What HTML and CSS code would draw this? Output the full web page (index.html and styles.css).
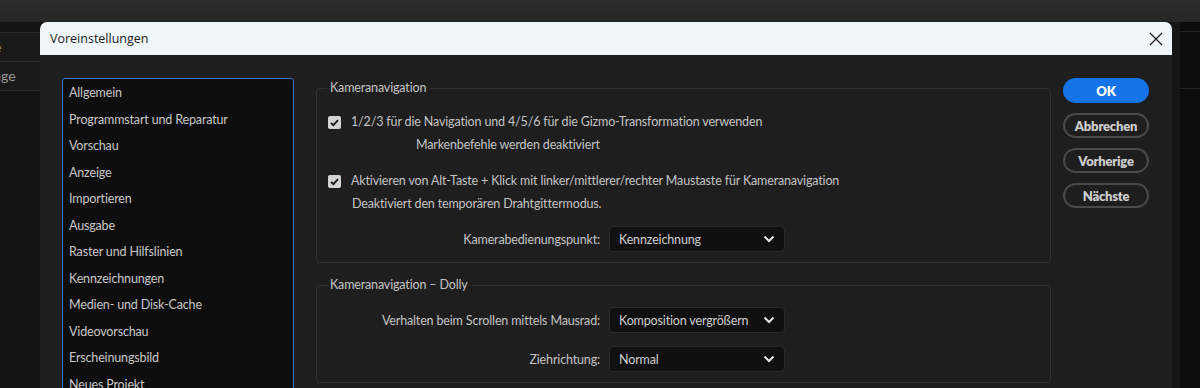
FILE: index.html
```html
<!DOCTYPE html>
<html lang="de">
<head>
    <meta charset="UTF-8" />
    <title>Voreinstellungen</title>
    <link rel="stylesheet" href="styles.css">
</head>
<body>

    <!-- App behind the dialog -->
    <div class="app">
        <div class="topbar"></div>
        <div class="workspace">
            <div class="side">
                <div class="side-gap"></div>
                <div class="side-row">e</div>
                <div class="side-row">age</div>
            </div>
            <div class="stage"></div>
            <div class="right-panel">
                <div class="rp-row"></div>
                <div class="rp-row tall"></div>
            </div>
        </div>
    </div>

    <!-- Dialog -->
    <div class="dialog">
        <div class="titlebar">
            <span class="title">Voreinstellungen</span>
            <svg class="close" width="14" height="14" viewBox="0 0 14 14">
                <path d="M1 1 L13 13 M13 1 L1 13" stroke="#1a1a1a" stroke-width="1.2" fill="none" />
            </svg>
        </div>

        <div class="dialog-body">
            <ul class="cat-list">
                <li>Allgemein</li>
                <li>Programmstart und Reparatur</li>
                <li>Vorschau</li>
                <li>Anzeige</li>
                <li>Importieren</li>
                <li>Ausgabe</li>
                <li>Raster und Hilfslinien</li>
                <li>Kennzeichnungen</li>
                <li>Medien- und Disk-Cache</li>
                <li>Videovorschau</li>
                <li>Erscheinungsbild</li>
                <li>Neues Projekt</li>
            </ul>

            <div class="settings">
                <fieldset class="group group-nav">
                    <legend>Kameranavigation</legend>

                    <div class="check-row">
                        <span class="checkbox">
                            <svg width="13" height="13" viewBox="0 0 13 13"><path d="M3 6.8 L5.4 9.2 L10 4.2" stroke="#111" stroke-width="1.8" fill="none" /></svg>
                        </span>
                        <span>1/2/3 für die Navigation und 4/5/6 für die Gizmo-Transformation verwenden</span>
                    </div>
                    <div class="note note-indent">Markenbefehle werden deaktiviert</div>

                    <div class="check-row second">
                        <span class="checkbox">
                            <svg width="13" height="13" viewBox="0 0 13 13"><path d="M3 6.8 L5.4 9.2 L10 4.2" stroke="#111" stroke-width="1.8" fill="none" /></svg>
                        </span>
                        <span>Aktivieren von Alt-Taste + Klick mit linker/mittlerer/rechter Maustaste für Kameranavigation</span>
                    </div>
                    <div class="note">Deaktiviert den temporären Drahtgittermodus.</div>

                    <div class="field-row first-field">
                        <label>Kamerabedienungspunkt:</label>
                        <div class="select"><span>Kennzeichnung</span><svg width="12" height="8" viewBox="0 0 12 8"><path d="M1.5 1.5 L6 6 L10.5 1.5" stroke="#e6e6e6" stroke-width="2" fill="none" /></svg></div>
                    </div>
                </fieldset>

                <fieldset class="group group-dolly">
                    <legend>Kameranavigation – Dolly</legend>

                    <div class="field-row">
                        <label>Verhalten beim Scrollen mittels Mausrad:</label>
                        <div class="select"><span>Komposition vergrößern</span><svg width="12" height="8" viewBox="0 0 12 8"><path d="M1.5 1.5 L6 6 L10.5 1.5" stroke="#e6e6e6" stroke-width="2" fill="none" /></svg></div>
                    </div>
                    <div class="field-row next">
                        <label>Ziehrichtung:</label>
                        <div class="select"><span>Normal</span><svg width="12" height="8" viewBox="0 0 12 8"><path d="M1.5 1.5 L6 6 L10.5 1.5" stroke="#e6e6e6" stroke-width="2" fill="none" /></svg></div>
                    </div>
                </fieldset>
            </div>

            <div class="actions">
                <button class="btn primary">OK</button>
                <button class="btn">Abbrechen</button>
                <button class="btn">Vorherige</button>
                <button class="btn">Nächste</button>
            </div>
        </div>
    </div>

</body>
</html>
```

FILE: styles.css
```css
* {
    margin: 0;
    padding: 0;
    box-sizing: border-box;
}

html,
body {
    width: 100%;
    height: 100%;
    overflow: hidden;
    background-color: #101010;
    font-family: 'Lato', 'Noto Sans', sans-serif;
}

/* app behind */

.app {
    display: flex;
    flex-direction: column;
    height: 100%;
}

.topbar {
    height: 22px;
    background: linear-gradient(#2d2d2d, #262626);
}

.workspace {
    flex: 1;
    display: flex;
}

.side {
    width: 40px;
    background-color: #141414;
}

.side-gap {
    height: 11px;
    border-bottom: 1px solid #2a2a2a;
}

.side-row {
    height: 29px;
    line-height: 27px;
    font-size: 14px;
    color: #9a9a9a;
    margin-left: -6px;
    border-bottom: 1px solid #2c2c2c;
    background-color: #191919;
    overflow: hidden;
}

.stage {
    flex: 1;
}

.right-panel {
    width: 28px;
    background-color: #0d0d0d;
    border-left: 8px solid #161616;
}

.rp-row {
    height: 10px;
    border-bottom: 1px solid #262626;
}

.rp-row.tall {
    height: 57px;
}

/* dialog */

.dialog {
    position: absolute;
    left: 40px;
    top: 22px;
    width: 1132px;
    height: 400px;
    background-color: #1e1e1e;
    border-radius: 7px 7px 0 0;
    overflow: hidden;
}

.titlebar {
    height: 33px;
    background-color: #eff6f9;
    display: flex;
    align-items: center;
    justify-content: space-between;
    padding: 0 9px 0 10px;
}

.title {
    font-family: 'Open Sans', sans-serif;
    font-size: 12.5px;
    color: #1b1b1b;
}

.dialog-body {
    display: flex;
    padding: 23px 23px 0 22px;
    gap: 22px;
    color: #c4c4c4;
    font-size: 12.5px;
    letter-spacing: -0.15px;
}

.cat-list {
    list-style: none;
    width: 232px;
    height: 340px;
    flex-shrink: 0;
    background-color: #0e0e0e;
    border: 1px solid #3b78c2;
    border-radius: 3px;
    padding: 1px 0 0 6px;
}

.cat-list li {
    line-height: 26.5px;
    color: #c8c8c8;
}

.settings {
    width: 735px;
    flex-shrink: 0;
    margin-top: 2px;
}

.group {
    border: 1px solid #333333;
    border-radius: 4px;
    padding: 0 10px 10px 11px;
    min-width: 0;
}

.group legend {
    line-height: 16px;
    padding: 0 4px 0 3px;
    margin-left: -1px;
    color: #c4c4c4;
}

.group-nav {
    padding-top: 17px;
}

.group-dolly {
    margin-top: 14px;
    padding-top: 14px;
}

.check-row {
    display: flex;
    align-items: center;
    gap: 10px;
    line-height: 18px;
}

.check-row.second {
    margin-top: 18px;
}

.checkbox {
    width: 13px;
    height: 13px;
    border-radius: 2px;
    background-color: #d4d4d4;
    display: flex;
}

.note {
    line-height: 18px;
    margin-top: 5px;
    padding-left: 24px;
}

.note-indent {
    padding-left: 88px;
}

.field-row {
    display: flex;
    align-items: center;
    gap: 9px;
}

.first-field {
    margin-top: 13px;
}

.field-row.next {
    margin-top: 13px;
}

.field-row label {
    width: 272px;
    text-align: right;
}

.select {
    width: 176px;
    height: 26px;
    background-color: #101010;
    border: 1px solid #2a2a2a;
    border-radius: 4px;
    display: flex;
    align-items: center;
    justify-content: space-between;
    padding: 0 9px 0 9px;
    color: #cfcfcf;
}

.actions {
    margin-left: -10px;
    display: flex;
    flex-direction: column;
    gap: 10px;
    width: 86px;
}

.btn {
    height: 25px;
    border-radius: 13px;
    border: 2px solid #4a4a4a;
    background-color: #1e1e1e;
    color: #cdcdcd;
    font-family: 'Lato', sans-serif;
    font-weight: 800;
    font-size: 13px;
    letter-spacing: -0.2px;
}

.btn.primary {
    border: none;
    background-color: #1473e6;
    color: #ffffff;
}
```
